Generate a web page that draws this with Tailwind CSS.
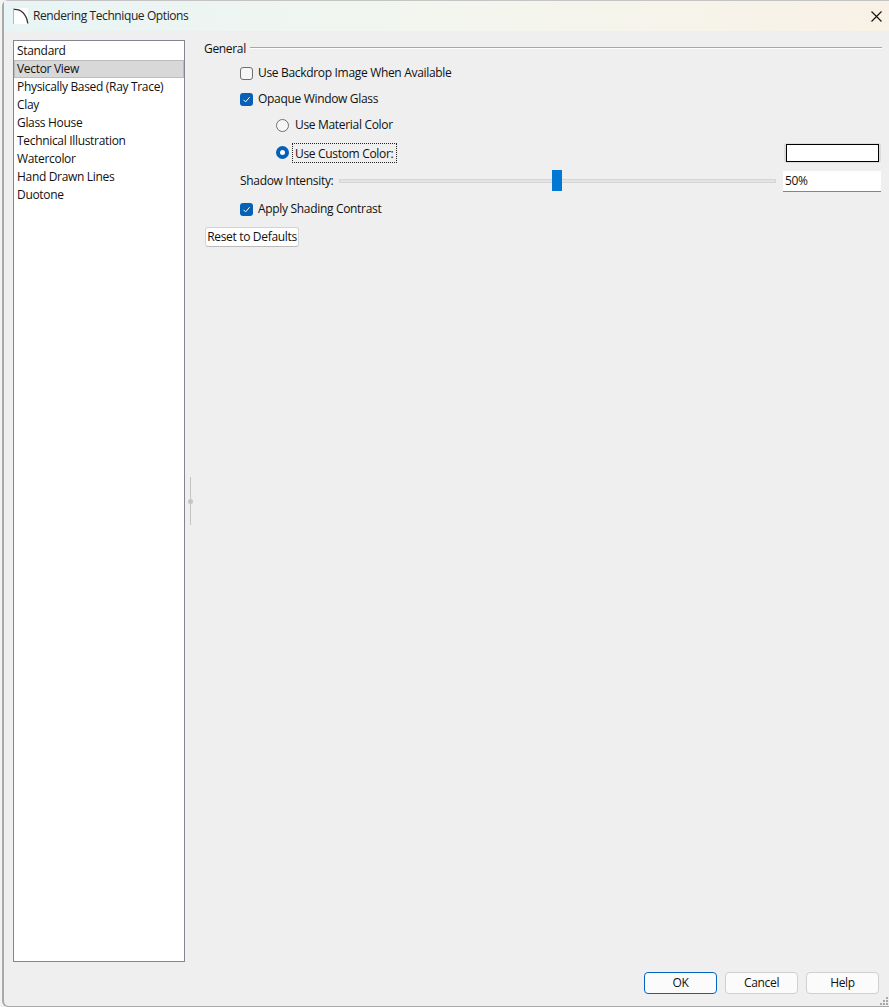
<!DOCTYPE html>
<html><head><meta charset="utf-8"><script src="https://cdn.jsdelivr.net/npm/@tailwindcss/browser@4"></script></head>
<body class="m-0">
<div class="w-[889px] h-[1007px] overflow-hidden bg-[#f3f3f3] pl-[2px] font-['Open_Sans','Noto_Sans',sans-serif] text-[12px] leading-[16px] text-[#111] tracking-[-0.32px]">
<div class="relative flex flex-col w-[887px] h-[1007px] border-l-2 border-b border-[#a9a9a9] border-t border-t-[#c4c4c4] rounded-tl-[6px] rounded-bl-[6px] bg-[#efefef]">
  <!-- title bar -->
  <div class="flex items-center h-[30px] shrink-0 pl-[9px] pr-[7px] bg-gradient-to-r from-[#e8f4f5] via-[#f3f6ef] to-[#f9f1e6]">
    <div class="w-[15px] h-[16px] bg-white border-l border-l-[#b8c85a]">
      <svg width="15" height="16" viewBox="0 0 15 16" fill="none"><path d="M0 1.5C7 1 12.5 6 13.8 15.5" stroke="#333" stroke-width="1.3"/></svg>
    </div>
    <span class="ml-[5px] text-[#222] tracking-[-0.4px]">Rendering Technique Options</span>
    <svg class="ml-auto" width="11" height="11" viewBox="0 0 11 11" fill="none"><path d="M0.5 0.5L10.5 10.5M10.5 0.5L0.5 10.5" stroke="#111" stroke-width="1.1"/></svg>
  </div>
  <!-- main -->
  <div class="flex flex-1 min-h-0 pl-[9px] pt-[9px]">
    <div class="w-[172px] h-[922px] shrink-0 bg-white border border-[#85858d] py-px">
      <div class="h-[18px] pl-[3px] leading-[18px]">Standard</div>
      <div class="h-[18px] pl-[2px] leading-[16px] bg-[#d8d8d8] border border-[#bcbcbc]">Vector View</div>
      <div class="h-[18px] pl-[3px] leading-[18px]">Physically Based (Ray Trace)</div>
      <div class="h-[18px] pl-[3px] leading-[18px]">Clay</div>
      <div class="h-[18px] pl-[3px] leading-[18px]">Glass House</div>
      <div class="h-[18px] pl-[3px] leading-[18px]">Technical Illustration</div>
      <div class="h-[18px] pl-[3px] leading-[18px]">Watercolor</div>
      <div class="h-[18px] pl-[3px] leading-[18px]">Hand Drawn Lines</div>
      <div class="h-[18px] pl-[3px] leading-[18px]">Duotone</div>
    </div>
    <!-- splitter -->
    <div class="w-[19px] shrink-0 h-[922px] flex items-center pl-[5px]">
      <div class="relative w-px h-[48px] bg-[#c4c4c4]">
        <div class="absolute left-[-2px] top-[22px] w-[5px] h-[5px] rounded-full bg-[#c4c4c4]"></div>
      </div>
    </div>
    <!-- options -->
    <div class="w-[678px] flex flex-col">
      <div class="flex items-start h-[16px]">
        <span class="leading-[17px]">General</span>
        <div class="flex-1 ml-[4px] mt-[7px] h-[2px] border-t border-[#a8a8a8] bg-white"></div>
      </div>
      <div class="flex items-center h-[26px] mt-[4px] pl-[36px]">
        <div class="w-[13px] h-[13px] rounded-[3px] border border-[#6f6f6f] bg-[#f6f6f6]"></div>
        <span class="ml-[5px]">Use Backdrop Image When Available</span>
      </div>
      <div class="flex items-center h-[26px] pl-[36px]">
        <div class="w-[13px] h-[13px] rounded-[3px] bg-[#0560b8] flex items-center justify-center">
          <svg width="9" height="9" viewBox="0 0 9 9" fill="none"><path d="M1.5 4.8L3.6 6.9L7.6 2.2" stroke="#fff" stroke-width="1"/></svg>
        </div>
        <span class="ml-[5px]">Opaque Window Glass</span>
      </div>
      <div class="flex items-center h-[26px] pl-[72px]">
        <div class="w-[13px] h-[13px] rounded-full border border-[#6f6f6f] bg-[#f6f6f6]"></div>
        <span class="ml-[6px]">Use Material Color</span>
      </div>
      <div class="flex items-center h-[29px] pl-[72px]">
        <div class="w-[13px] h-[13px] rounded-full border-[4px] border-[#0560b8] bg-white"></div>
        <span class="ml-[3px] h-[20px] leading-[19px] pl-[2px] pr-[3px] border border-dotted border-[#222]">Use Custom Color:</span>
        <div class="ml-auto mr-px w-[97px] h-[20px] px-[2px] py-px rounded-[3px] bg-[#dcdcdc]"><div class="w-full h-full bg-white border border-black"></div></div>
      </div>
      <div class="flex items-center h-[28px] pl-[36px]">
        <span class="w-[99px] shrink-0">Shadow Intensity:</span>
        <div class="relative w-[437px] h-[4px] bg-[#e4e4e4] border border-[#d6d6d6]">
          <div class="absolute left-[212px] top-[-10px] w-[10px] h-[21px] bg-[#0078d4]"></div>
        </div>
        <div class="ml-[7px] w-[98px] h-[21px] bg-white border-b border-[#858585] pl-[2px] leading-[20px]">50%</div>
      </div>
      <div class="flex items-center h-[28px] pl-[36px]">
        <div class="w-[13px] h-[13px] rounded-[3px] bg-[#0560b8] flex items-center justify-center">
          <svg width="9" height="9" viewBox="0 0 9 9" fill="none"><path d="M1.5 4.8L3.6 6.9L7.6 2.2" stroke="#fff" stroke-width="1"/></svg>
        </div>
        <span class="ml-[5px]">Apply Shading Contrast</span>
      </div>
      <div class="mt-[4px] ml-[1px] w-[94px] h-[20px] rounded-[3px] bg-white border border-[#d4d4d4] border-b-[#bbbbbb] flex items-center justify-center">Reset to Defaults</div>
    </div>
  </div>
  <!-- footer -->
  <div class="flex justify-end gap-[8px] pr-[10px] pb-[12px] shrink-0">
    <div class="w-[73px] h-[22px] rounded-[4px] bg-[#fbfbfb] border-[1.5px] border-[#0067c0] flex items-center justify-center">OK</div>
    <div class="w-[73px] h-[22px] rounded-[4px] bg-[#fbfbfb] border border-[#cfcfcf] flex items-center justify-center">Cancel</div>
    <div class="w-[73px] h-[22px] rounded-[4px] bg-[#fbfbfb] border border-[#cfcfcf] flex items-center justify-center">Help</div>
  </div>
  <svg class="absolute right-0 bottom-0" width="9" height="9" viewBox="0 0 9 9" fill="#a8a8a8"><rect x="6" y="0" width="2" height="2"/><rect x="3" y="3" width="2" height="2"/><rect x="6" y="3" width="2" height="2"/><rect x="0" y="6" width="2" height="2"/><rect x="3" y="6" width="2" height="2"/><rect x="6" y="6" width="2" height="2"/></svg>
</div>
</div>
</body></html>
